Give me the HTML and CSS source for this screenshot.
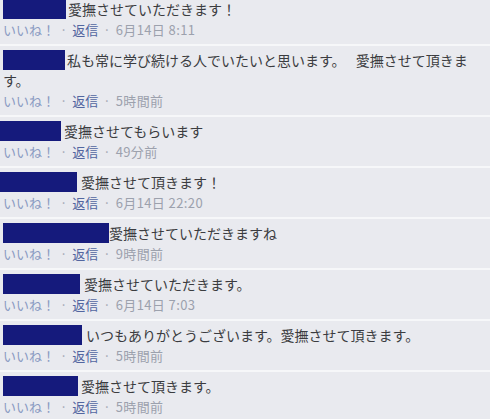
FILE: index.html
```html
<!DOCTYPE html>
<html lang="ja">
<head>
  <meta charset="UTF-8">
  <meta name="viewport" content="width=device-width, initial-scale=1.0">
  <title>コメント</title>
  <link rel="stylesheet" href="styles.css">
</head>
<body>
  <ul class="comment-list">
    <li class="comment">
      <p class="comment-text"><span class="name" style="width: 63px"></span><span class="body">愛撫させていただきます！</span></p>
      <p class="comment-actions"><a class="like">いいね！</a><span class="dot">·</span><a class="reply">返信</a><span class="dot">·</span><span class="time">6月14日 8:11</span></p>
    </li>
    <li class="comment">
      <p class="comment-text"><span class="name" style="width: 62px"></span><span class="body">私も常に学び続ける人でいたいと思います。　 愛撫させて頂きます。</span></p>
      <p class="comment-actions"><a class="like">いいね！</a><span class="dot">·</span><a class="reply">返信</a><span class="dot">·</span><span class="time">5時間前</span></p>
    </li>
    <li class="comment">
      <p class="comment-text"><span class="name flush" style="width: 61px"></span><span class="body gap">愛撫させてもらいます</span></p>
      <p class="comment-actions"><a class="like">いいね！</a><span class="dot">·</span><a class="reply">返信</a><span class="dot">·</span><span class="time">49分前</span></p>
    </li>
    <li class="comment">
      <p class="comment-text"><span class="name flush" style="width: 77px"></span><span class="body wide-gap">愛撫させて頂きます！</span></p>
      <p class="comment-actions"><a class="like">いいね！</a><span class="dot">·</span><a class="reply">返信</a><span class="dot">·</span><span class="time">6月14日 22:20</span></p>
    </li>
    <li class="comment">
      <p class="comment-text"><span class="name" style="width: 106px"></span><span class="body tight">愛撫させていただきますね</span></p>
      <p class="comment-actions"><a class="like">いいね！</a><span class="dot">·</span><a class="reply">返信</a><span class="dot">·</span><span class="time">9時間前</span></p>
    </li>
    <li class="comment">
      <p class="comment-text"><span class="name" style="width: 77px"></span><span class="body wide-gap">愛撫させていただきます。</span></p>
      <p class="comment-actions"><a class="like">いいね！</a><span class="dot">·</span><a class="reply">返信</a><span class="dot">·</span><span class="time">6月14日 7:03</span></p>
    </li>
    <li class="comment">
      <p class="comment-text"><span class="name" style="width: 79px"></span><span class="body wide-gap">いつもありがとうございます。愛撫させて頂きます。</span></p>
      <p class="comment-actions"><a class="like">いいね！</a><span class="dot">·</span><a class="reply">返信</a><span class="dot">·</span><span class="time">5時間前</span></p>
    </li>
    <li class="comment">
      <p class="comment-text"><span class="name" style="width: 75px"></span><span class="body gap">愛撫させて頂きます。</span></p>
      <p class="comment-actions"><a class="like">いいね！</a><span class="dot">·</span><a class="reply">返信</a><span class="dot">·</span><span class="time">5時間前</span></p>
    </li>
  </ul>
</body>
</html>
```

FILE: styles.css
```css
* {
  margin: 0;
  padding: 0;
  box-sizing: border-box;
}

html, body {
  background-color: #e9eaef;
  overflow: hidden;
}

body {
  font-family: "Noto Sans CJK JP", sans-serif;
  color: #3b3c40;
}

.comment-list {
  list-style: none;
  margin-top: -5px;
}

.comment {
  padding: 4px 0 5px 3px;
  border-bottom: 2px solid #f6f7f9;
}

.comment-text {
  font-size: 14px;
  line-height: 17px;
  margin-bottom: 2px;
}

.name {
  display: inline-block;
  height: 20px;
  vertical-align: top;
  background-color: #151a7c;
}

.name.flush {
  margin-left: -3px;
}

.body {
  margin-left: 2px;
  vertical-align: top;
  line-height: 20px;
}

.body.tight {
  margin-left: 0;
}

.body.gap {
  margin-left: 3px;
}

.body.wide-gap {
  margin-left: 4px;
}

.comment-actions {
  font-size: 13px;
  line-height: 18px;
  white-space: nowrap;
}

.like {
  color: #8a9ac2;
}

.reply {
  color: #5266a0;
}

.dot {
  color: #a3a7b2;
  margin: 0 5px;
}

.time {
  color: #9ca1ad;
  font-size: 13px;
  letter-spacing: 0.4px;
}
```
